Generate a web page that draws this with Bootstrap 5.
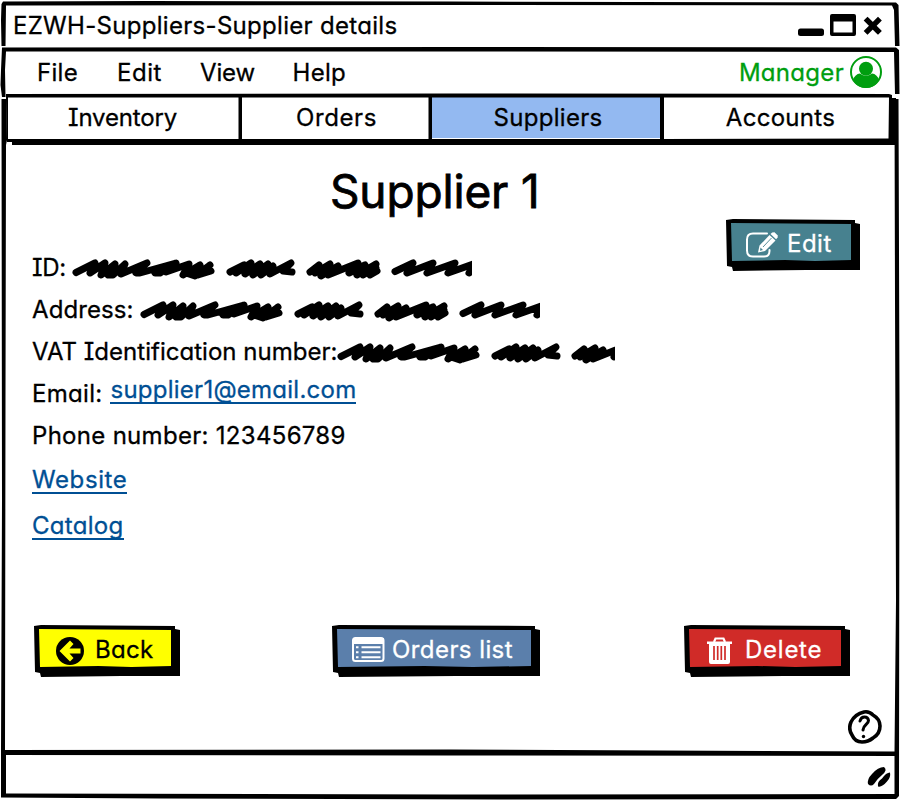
<!DOCTYPE html>
<html lang="en">
<head>
<meta charset="utf-8">
<meta name="viewport" content="width=device-width, initial-scale=1">
<title>EZWH-Suppliers-Supplier details</title>
<link href="https://cdn.jsdelivr.net/npm/bootstrap@5.3.0/dist/css/bootstrap.min.css" rel="stylesheet">
<style>
body{font-family:Inter,"Liberation Sans",sans-serif;font-feature-settings:"cv11","cv08";font-size:24px;line-height:42px;letter-spacing:.3px;color:#000;background:#fff;-webkit-text-stroke:.3px currentColor;white-space:nowrap}
svg{display:block;flex:none}
a{text-decoration:none}
.window{width:900px;height:800px}
.frame-lines{pointer-events:none;z-index:2;top:0;left:0}
.titlebar{height:48px;padding:6px 17px 0 13px;line-height:40px}
.menubar{height:47px;padding:4px 18px 0 37px}
.menubar .menu-item{color:#000}
.menu-file{width:80px}.menu-edit{width:83px;letter-spacing:.55px}.menu-view{width:92.500px;letter-spacing:-.14px}
.manager{color:#009e0f;line-height:41px}
.manager svg{margin:-1px 0 0 6px}
.tabs{height:49px;padding:2px 11px 6px 8px;display:grid;grid-template-columns:232px 190px 232px 1fr}
.tabs a{color:#000;text-align:center;line-height:41px}
.tabs .tab-inventory{letter-spacing:-.17px;padding-right:3px}
.tabs .tab-orders{letter-spacing:.6px;padding-left:3px}
.tabs .active{background:#93b9f1;padding-left:4px}
.tabs .tab-accounts{padding-left:10px}
.page{height:608px}
.page h1{font-size:46px;line-height:60px;font-weight:400;letter-spacing:-.15px;margin:17px 0 0 330px;-webkit-text-stroke-width:.8px}
.fields{margin-left:32px;padding-top:26px;width:600px}
.field{height:42px}
.field .ident{letter-spacing:-.3px}
.field .vat{letter-spacing:.02px}
.field .address{letter-spacing:.1px}
.field svg{margin-top:11px}
.web{color:#004f94;border-bottom:2px solid #004f94;line-height:26px;height:27px;letter-spacing:.25px}
.site{height:46px;padding-top:10px}
.site .web{letter-spacing:.6px}
.site + .site .web{letter-spacing:.3px}
.sk{display:block;background:#000;height:52px;padding:4px 9px 10px 5px;clip-path:polygon(0 1px,7px 0,calc(100% - 5px) 1px,calc(100% - 5px) 4px,100% 5px,100% calc(100% - 1px),60% calc(100% - 1px),7px 100%,6px calc(100% - 4px),1px calc(100% - 5px))}
.face{height:38px;clip-path:polygon(0 0,100% 1px,100% 37px,70% 38px,45% 37px,1px 38px);color:#fff;line-height:41px}
.edit-btn{width:134px;margin:-2px 40px 0 0}
.edit-btn .face{background:#47818f;letter-spacing:.5px}
.actions{margin:0 50px 0 34px;padding-top:76px}
.back-btn{width:146px}.back-btn .face{background:#ff0;color:#000}
.orders-btn{width:208px;margin-left:8px}.orders-btn .face{background:#5b7fab;letter-spacing:.43px}
.delete-btn{width:166px}.delete-btn .face{background:#d02b28;letter-spacing:.75px}
.help{margin:32px 18px 0 auto}
.statusbar{height:48px;padding:11px 8px 0 0}
</style>
</head>
<body>
<svg width="0" height="0" class="position-absolute">
<symbol id="scribble" viewBox="0 0 400 22"><path fill="none" stroke="#000" stroke-width="7" stroke-linecap="round" stroke-linejoin="round" d="M4 14.500L23 5L18 15L33 5L29 17L43 6L36 17L41 17L53 6L49 16L75 5L64 15L68 15L104 5L83 15L88 15L102 6L94 14L117 6L111 17L128 7L117 16L123 18L138 7L126 17L139 13M158 14L172 7L164 15L179 5L173 16L188 6L181 17L196 6L189 17L201 8L198 16L219 5L211 13L220 14M238 14L247 7L243 15L258 6L249 18L266 8L256 17L286 5L277 15L293 7L285 17L304 6L291 17L304 10L298 17L305 13M323 13.500L341 5L335 15L361 5L355 15L383 5L376 15L404 5L397 15L402 12"/></symbol>
</svg>
<div class="window position-relative overflow-hidden d-flex flex-column">
<header class="titlebar d-flex justify-content-between">
<span>EZWH-Suppliers-Supplier details</span>
<svg width="85" height="40" viewBox="798 6 85 40"><rect x="798" y="28.500" width="26" height="7.500" rx="2.500"/><path fill-rule="evenodd" d="M832 14h22q2 0 2 2v18q0 2-2 2h-22q-2 0-2-2v-18q0-2 2-2zM833.500 21.500v11h19v-11z"/><path d="M867.500 20.500l10.500 10.500M878 20.500l-10.500 10.500" stroke="#000" stroke-width="5.400" stroke-linecap="square"/></svg>
</header>
<nav class="menubar d-flex justify-content-between">
<div class="d-flex"><a href="#" class="menu-item menu-file">File</a><a href="#" class="menu-item menu-edit">Edit</a><a href="#" class="menu-item menu-view">View</a><a href="#" class="menu-item">Help</a></div>
<div class="d-flex manager"><span>Manager</span>
<svg width="32" height="42" viewBox="850 51 32 42"><circle cx="866" cy="72" r="15" fill="none" stroke="#009e0f" stroke-width="2"/><circle cx="866" cy="68.700" r="7" fill="#009e0f"/><path fill="#009e0f" d="M853 80q2-6 7-6.500 6 4.500 12 0 5 .5 7 6.500-4 8-13 8t-13-8z"/></svg></div>
</nav>
<nav class="tabs"><a href="#" class="tab-inventory">Inventory</a><a href="#" class="tab-orders">Orders</a><a href="#" class="active">Suppliers</a><a href="#" class="tab-accounts">Accounts</a></nav>
<main class="page">
<h1>Supplier 1</h1>
<div class="d-flex justify-content-between align-items-start">
<div class="fields">
<div class="field d-flex"><span class="ident">ID:</span><svg width="400" height="22" style="margin-left:6px"><use href="#scribble" width="400" height="22"/></svg></div>
<div class="field d-flex"><span class="address">Address:</span><svg width="400" height="22" style="margin-left:6px"><use href="#scribble" width="400" height="22"/></svg></div>
<div class="field d-flex"><span class="vat">VAT Identification number:</span><svg width="278" height="22"><use href="#scribble" width="400" height="22"/></svg></div>
<div class="field d-flex"><span>Email:</span><a href="#" class="web mt-1 ms-2">supplier1@email.com</a></div>
<div class="field">Phone number: 123456789</div>
<div class="site d-flex"><a href="#" class="web">Website</a></div>
<div class="site d-flex"><a href="#" class="web">Catalog</a></div>
</div>
<a href="#" class="sk edit-btn"><span class="face d-flex"><svg width="56" height="38" viewBox="731 223 56 38"><path fill="none" stroke="#fff" stroke-width="2" stroke-linecap="round" d="M767 233.500h-14q-6 0-6 6v11q0 6 6 6h11q5.500 0 5.500-5.500v-1"/><path fill="#fff" fill-rule="evenodd" d="M758 252.500l1.500-7 10-10.500 6 5.500-10.500 10.500zM760.500 247.500l-.5 3.200 3-.6z"/><path fill="#fff" d="M770.500 234l1.700-1.600 2.300-.2 3.300 3.200-.2 2.200-1.500 1.700z"/><path stroke="#47818f" stroke-width=".9" d="M763 247l8.500-9"/></svg>Edit</span></a>
</div>
<div class="actions d-flex justify-content-between">
<a href="#" class="sk back-btn"><span class="face d-flex"><svg width="56" height="38" viewBox="39 630 56 38"><circle cx="70" cy="652" r="14"/><path fill="#ff0" d="M59.500 652l10.500-10.500 3.500 3.500-4 4.500h11v5h-11l4 4.500-3.500 3.500z"/></svg>Back</span></a>
<a href="#" class="sk orders-btn"><span class="face d-flex"><svg width="55" height="38" viewBox="337 630 55 38"><rect x="353" y="639" width="30.500" height="23" rx="2.500" fill="none" stroke="#fff" stroke-width="2"/><path fill="#fff" d="M353 639h31v6h-31z"/><path stroke="#fff" stroke-width="2" d="M356 648.200h2.500m3 0h19M356 653.200h2.500m3 0h19M356 658.200h2.500m3 0h19"/></svg>Orders list</span></a>
<a href="#" class="sk delete-btn"><span class="face d-flex"><svg width="56" height="38" viewBox="689 630 56 38"><path fill="none" stroke="#fff" stroke-width="2.200" d="M714 643l1.500-3.500h8l1.500 3.500"/><path fill="#fff" d="M707 642.500h25v2.500h-25zM709 645h21v18q0 2-2 2h-17q-2 0-2-2z"/><path stroke="#d02b28" stroke-width="1.700" d="M714 647v14M717.700 647v14M721.300 647v14M725 647v14"/></svg>Delete</span></a>
</div>
<svg class="help" width="34" height="36" viewBox="848 709 34 36"><path fill="none" stroke="#000" stroke-width="3.600" d="M864 712q5-1 9 3 7 4 7 11 0 8-7 12-5 4-11 4-7 0-10-7-4-6-1-13 4-8 13-10z"/><path fill="none" stroke="#000" stroke-width="3" stroke-linecap="round" d="M860 721q1-4 4.500-4t4 3.500c0 4-5 4-5.500 9.500"/><circle cx="863.500" cy="736.500" r="1.700"/></svg>
</main>
<footer class="statusbar d-flex justify-content-end"><svg width="26" height="26" viewBox="866 763 26 26"><path d="M868 784q-1-5 4-10 6-7 12-7 4 3-2 8-5 4-8 9-3 3-6 0zM878 786.500q-1-5 4-8 4-6 8-6 1 5-3 9-5 6-9 5z"/></svg></footer>
<svg class="frame-lines position-absolute" width="900" height="800" viewBox="0 0 900 800">
<path fill-rule="evenodd" d="M3 1.500L150 1 450 1.500 896 2.500 898.500 5 899.500 46H895L894 10 892 5.500 450 5 6 5.500 5.500 46H1.500L1 20 1.500 4z"/>
<path d="M2 47.500L450 47 896 47.500 899 50 899.500 94H895L894 52 450 51.500 6 51.500 5 70 5.500 97H2L.5 85 1 70z"/>
<path d="M6 94L450 93.500 889 94 892 95V98H896V145H12V142H7L6 98z M8 97.500V139H238.500V97.500zM242 97.500V139H428.500V97.500zM432 97.500V139H660V97.500zM664 97.500V139L888.500 138.500 889 97.500z" fill-rule="evenodd"/>
<path d="M1.500 99H6.500L7 140 6 145 5.500 400 5 750 450 749.500 894.500 751.500 896 600 895 300 894.500 99H898.500L899.500 400 899 796 896 799 500 799.500 160 798.500 1 797.500 1 750 2 500zM6 755V793.500L450 794.500 894.500 794V756L450 755.500z" fill-rule="evenodd"/>
</svg>
</div>
<script src="https://cdn.jsdelivr.net/npm/bootstrap@5.3.0/dist/js/bootstrap.bundle.min.js"></script>
</body>
</html>
